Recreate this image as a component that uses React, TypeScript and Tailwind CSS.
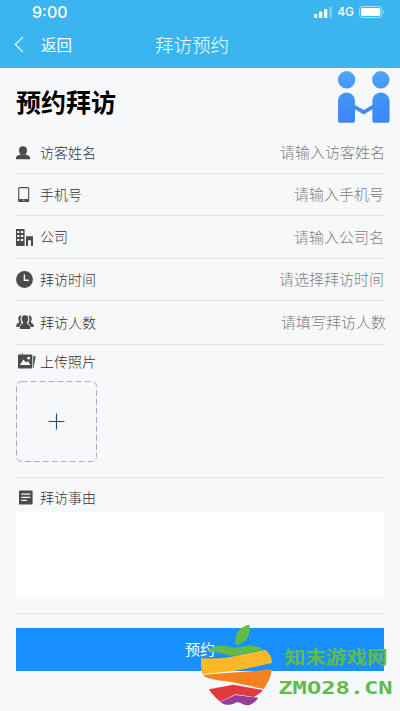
import type { ReactNode } from "react";

const UserIcon = () => (
    <svg width="14" height="14" viewBox="0 0 14 14" fill="#4b4b4b">
        <ellipse cx="7" cy="4.4" rx="4" ry="4.2" />
        <path d="M0 13.2V11.6C0 10 2.4 9.3 4.6 8.2H9.4C11.6 9.3 14 10 14 11.6V13.2Z" />
    </svg>
);

const PhoneIcon = () => (
    <svg className="ml-[1.5px]" width="12" height="15" viewBox="0 0 12 15">
        <rect x=".7" y="0.6" width="10" height="13.8" rx="1" fill="none" stroke="#4b4b4b" strokeWidth="1.1" />
        <path d="M.7 12H10.7V14.4H.7Z" fill="#4b4b4b" />
        <rect x="4.8" y="12.7" width="1.8" height=".9" fill="#f7f8fa" />
    </svg>
);

const CompanyIcon = () => (
    <svg width="18" height="17" viewBox="0 0 18 17">
        <path d="M0 0H8.6V17H0Z M10 7.2H17V17H15V11.2H12V17H10Z" fill="#4b4b4b" />
        <path d="M1.3 2H3.5V4H1.3ZM5 2H7.2V4H5ZM1.3 6H3.5V8H1.3ZM5 6H7.2V8H5ZM1.3 10H3.5V12H1.3ZM5 10H7.2V12H5Z" fill="#f7f8fa" />
    </svg>
);

const ClockIcon = () => (
    <svg width="17" height="17" viewBox="0 0 17 17">
        <circle cx="8.5" cy="8.5" r="8.4" fill="#4b4b4b" />
        <path d="M8.4 3.4V9.2H12.8" fill="none" stroke="#f7f8fa" strokeWidth="1.4" />
    </svg>
);

const GroupIcon = () => (
    <svg width="18" height="15" viewBox="0 0 18 15" fill="#4b4b4b">
        <path d="M5.8.6C3.5.2 2 1.6 2.3 4C2.4 5.5 3 6 3.2 7C3.2 8 .4 8.4.3 10.4L.2 12H3.3C3.4 9.8 5 9.2 6 8.6C4.4 6.5 4 2.5 5.8.6Z" />
        <path d="M12.2.6C14.5.2 16 1.6 15.7 4C15.6 5.5 15 6 14.8 7C14.8 8 17.6 8.4 17.7 10.4L17.8 12H14.7C14.6 9.8 13 9.2 12 8.6C13.6 6.5 14 2.5 12.2.6Z" />
        <path d="M9 .3C6.5.3 5.5 2.2 5.8 4.6C6 6 6.8 7 7.2 8C7.2 9.4 4 9.4 3.8 12L3.7 14H14.3L14.2 12C14 9.4 10.8 9.4 10.8 8C11.2 7 12 6 12.2 4.6C12.5 2.2 11.5.3 9 .3Z" />
    </svg>
);

const PhotoIcon = () => (
    <svg className="-mt-0.5 ml-px" width="19" height="17" viewBox="0 0 19 17">
        <path d="M3.5 1L5 .3L6 1" fill="none" stroke="#777" strokeWidth=".7" />
        <rect x="1" y="1.6" width="14.3" height="13.8" rx=".8" fill="#4b4b4b" />
        <path d="M2.8 12L6.5 6.5L9 9.6L10.8 8L13.6 12Z" fill="#f7f8fa" />
        <circle cx="11.7" cy="5.2" r="1.4" fill="#f7f8fa" />
        <path d="M16.3 3L18.7 3.3L16.5 14.8L16 14.7Z" fill="#4b4b4b" />
    </svg>
);

const NoteIcon = () => (
    <svg width="14" height="15" viewBox="0 0 14 15">
        <rect x="0" y=".4" width="13.6" height="14.2" rx="1.2" fill="#4b4b4b" />
        <path d="M2.3 4.2H11.3M2.3 7.3H11.3M2.3 10.4H8" stroke="#f7f8fa" strokeWidth="1.3" />
    </svg>
);

const Handshake = () => (
    <svg className="absolute left-[337px] top-[70px]" width="54" height="54" viewBox="0 0 54 54">
        <defs>
            <linearGradient id="people" gradientUnits="userSpaceOnUse" x1="0" y1="0" x2="0" y2="54">
                <stop offset="0" stopColor="#4fa3fb" />
                <stop offset="1" stopColor="#3a84f5" />
            </linearGradient>
        </defs>
        <g fill="url(#people)">
            <circle cx="9.6" cy="9.8" r="8.7" />
            <circle cx="43.8" cy="9.8" r="8.7" />
            <path d="M1 31.5C1 26 5 22.5 9.6 22.5S18 26 18 31.5V35L26.7 40L35.4 35V31.5C35.4 26 39 22.5 43.8 22.5S52.6 26 52.6 31.5V50.8Q52.6 52.8 50.6 52.8H37.4Q35.4 52.8 35.4 50.8V39.2L26.7 44.4L18 39.2V50.8Q18 52.8 16 52.8H3Q1 52.8 1 50.8Z" />
        </g>
    </svg>
);

const Watermark = () => (
    <svg className="absolute left-[190px] top-[610px]" width="210" height="101" viewBox="0 0 630 303">
        <path d="M138 106C131 70 151 49 178 44C184 75 168 99 138 106Z" fill="#62bb46" />
        <path d="M54 125C68 103 99 106 119 110C140 117 151 109 173 107C195 105 212 112 221 120L124 137C99 132 72 122 54 125Z" fill="#62bb46" />
        <path d="M34 144C73 148 111 145 144 136L225 120C239 128 247 146 246 159L159 178C118 186 77 188 37 193C33 178 32 158 34 144Z" fill="#fdb827" />
        <path d="M38 195C89 190 158 187 245 178C244 202 232 221 221 237L124 216C97 211 54 211 38 195Z" fill="#f58220" />
        <path d="M57 238L130 224L219 240C209 251 198 258 191 261L137 253L91 275C76 264 66 252 57 238Z" fill="#e03a3e" />
        <path d="M91 276L137 255L205 263C195 278 181 288 166 285C153 282 148 274 137 278C121 286 105 288 91 276Z" fill="#963d97" />
        <text x="284" y="161" textLength="309" lengthAdjust="spacingAndGlyphs" className="fill-[#62bb46] font-['Noto_Sans_CJK_SC',sans-serif] text-[54px] font-bold">知末游戏网</text>
        <text x="265" y="251" textLength="343" lengthAdjust="spacingAndGlyphs" className="fill-[#62bb46] font-['DejaVu_Sans_Mono',monospace] text-[51px] font-bold">ZMO28.CN</text>
    </svg>
);

const fields = [
    { label: "访客姓名", hint: "请输入访客姓名", icon: <UserIcon />, row: "h-[42px]", hintPos: "-mr-px" },
    { label: "手机号", hint: "请输入手机号", icon: <PhoneIcon />, row: "h-[42px]", hintPos: "" },
    { label: "公司", hint: "请输入公司名", icon: <CompanyIcon />, row: "h-[43px]", hintPos: "" },
    { label: "拜访时间", hint: "请选择拜访时间", icon: <ClockIcon />, row: "h-[42px]", hintPos: "" },
    { label: "拜访人数", hint: "请填写拜访人数", icon: <GroupIcon />, row: "h-[44px]", hintPos: "-mr-0.5" },
];

const Label = ({ icon, children }: { icon: ReactNode; children: ReactNode }) => (
    <div className="flex items-center">
        <span className="flex w-6 shrink-0">{icon}</span>
        <span className="-mt-0.5 text-[14px] leading-5 text-[#333]">{children}</span>
    </div>
);

const App = () => {
    return (
        <div className="relative h-[711px] w-[400px] overflow-hidden bg-[#f7f8fa] font-['Noto_Sans_CJK_SC',sans-serif] font-light">
            <header className="h-[68px] bg-[#3ab5f0] text-white">
                <div className="flex h-[23px] items-center justify-between pl-8 pr-[15px] font-['Inter',sans-serif]">
                    <span className="text-[16px] font-medium leading-6">9:00</span>
                    <div className="flex items-center">
                        <svg width="19" height="12" viewBox="0 0 19 12" fill="#fff">
                            <rect x="0" y="8" width="3.3" height="4" rx=".8" />
                            <rect x="5" y="5.6" width="3.3" height="6.4" rx=".8" />
                            <rect x="10" y="3" width="3.3" height="9" rx=".8" />
                            <rect x="15" y="0.5" width="3.3" height="11.5" rx=".8" opacity=".3" />
                        </svg>
                        <span className="ml-1 text-[12px] font-medium">4G</span>
                        <svg className="ml-[5px]" width="26" height="12" viewBox="0 0 26 12">
                            <rect x=".5" y=".5" width="22.4" height="11" rx="3" fill="none" stroke="#fff" strokeOpacity=".55" />
                            <rect x="2" y="2" width="19.4" height="8" rx="1.5" fill="#fff" />
                            <path d="M24.2 4V8Q26 6 24.2 4Z" fill="#fff" opacity=".6" />
                        </svg>
                    </div>
                </div>
                <div className="grid h-[43px] grid-cols-[1fr_auto_1fr] items-center">
                    <div className="flex items-center pl-[14px]">
                        <svg width="10" height="17" viewBox="0 0 10 17" fill="none" stroke="#fff" strokeWidth="1.1">
                            <path d="M9 .8L1.3 8.5L9 16.2" />
                        </svg>
                        <span className="ml-[17px] text-[15.5px] font-normal">返回</span>
                    </div>
                    <h1 className="-ml-4 text-[18.5px]">拜访预约</h1>
                </div>
            </header>

            <Handshake />

            <main className="px-4">
                <h2 className="h-16 text-[25px] font-bold leading-[66px] text-black">预约拜访</h2>

                {fields.map((f) => (
                    <div key={f.label} className={`flex items-center justify-between border-b border-[#dfe2e6] ${f.row}`}>
                        <Label icon={f.icon}>{f.label}</Label>
                        <span className={`text-[15px] text-[#808080] ${f.hintPos}`}>{f.hint}</span>
                    </div>
                ))}

                <section className="h-[133px] border-b border-[#dfe2e6] pt-2">
                    <Label icon={<PhotoIcon />}>上传照片</Label>
                    <button className="mt-[10px] block h-[81px] w-[81px]">
                        <svg width="81" height="81" viewBox="0 0 81 81" fill="none">
                            <rect x=".5" y=".5" width="80" height="80" rx="5" stroke="#a0afca" strokeDasharray="6 3" />
                            <path d="M40.5 32.5V48.5M32.5 40.5H48.5" stroke="#174f82" strokeWidth="1.2" />
                        </svg>
                    </button>
                </section>

                <section className="h-[136px] border-b border-[#dfe2e6] pt-[11px]">
                    <Label icon={<span className="-mt-0.5 ml-[3px]"><NoteIcon /></span>}>拜访事由</Label>
                    <textarea className="mt-[5px] block h-[85px] w-full resize-none bg-white outline-none" />
                </section>

                <button className="mt-[14px] block h-[43px] w-full bg-[#1890ff] text-[15px] font-normal text-white">预约</button>
            </main>

            <Watermark />
        </div>
    );
};

export default App;
